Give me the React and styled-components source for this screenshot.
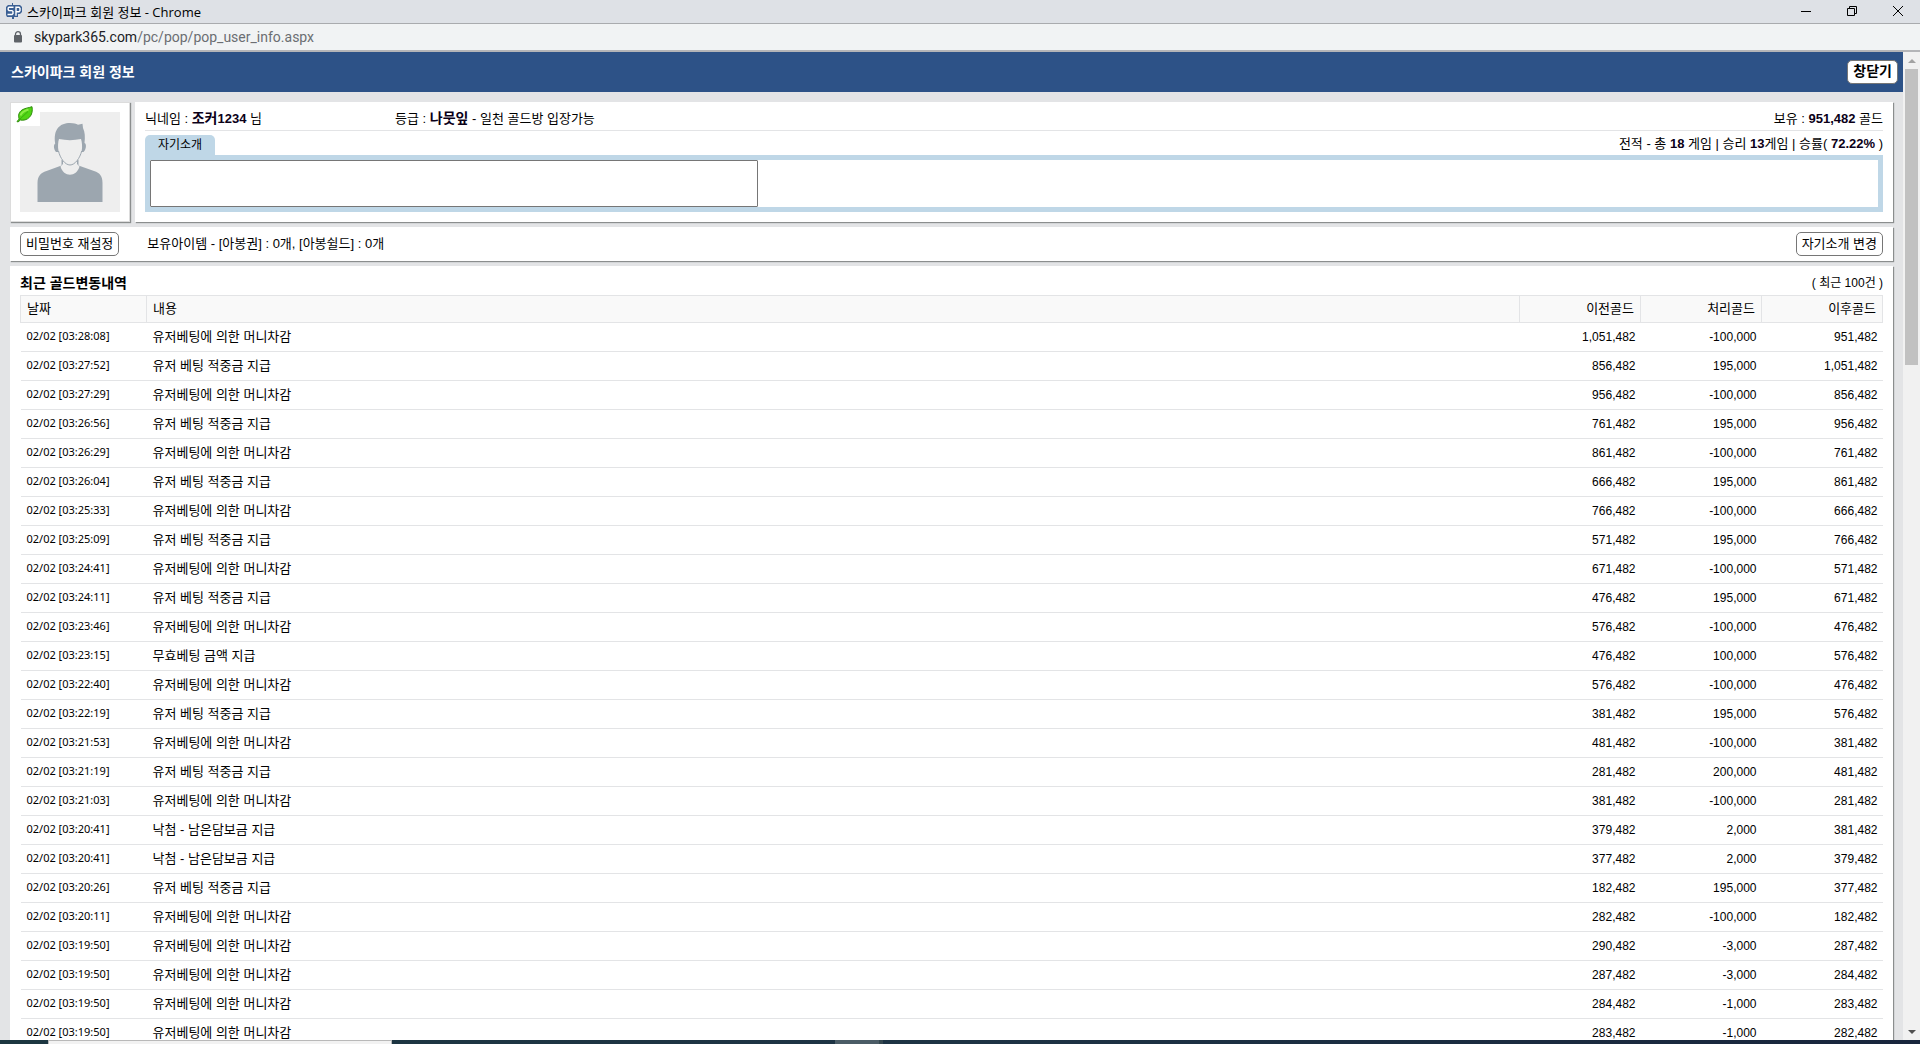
import React from "react";
import styled, { createGlobalStyle } from "styled-components";

const GlobalStyle = createGlobalStyle`
  * {
    box-sizing: border-box;
  }
  body {
    margin: 0;
    font-family: "Liberation Sans", "Noto Sans CJK KR", sans-serif;
    font-size: 13px;
    line-height: 18px;
    color: #000;
  }
`;

const Window = styled.div`
  height: 100vh;
  display: flex;
  flex-direction: column;
  overflow: hidden;
`;

const TitleBar = styled.header`
  display: flex;
  align-items: center;
  flex-shrink: 0;
  height: 24px;
  padding: 0 16px 2px 6px;
  background-color: #dee1e6;
  border-bottom: 1px solid #a9abae;
`;

const WindowTitle = styled.span`
  flex: 1;
  margin-left: 5px;
  padding-top: 2px;
  font-family: "Open Sans", "Noto Sans CJK KR", sans-serif;
  font-size: 13px;
`;

const WindowButtons = styled.div`
  display: flex;
  gap: 34px;
`;

const WindowButton = styled.button`
  display: flex;
  width: 12px;
  height: 12px;
  padding: 0;
  border: none;
  background: none;
`;

const AddressBar = styled.div`
  display: flex;
  align-items: center;
  flex-shrink: 0;
  gap: 11px;
  height: 28px;
  padding: 0 13px;
  background-color: #f1f3f4;
  border-bottom: 2px solid #b4b5b8;
`;

const Url = styled.span`
  font-family: Roboto, sans-serif;
  font-size: 14px;
  color: #6b6e72;
`;

const UrlHost = styled.span`
  color: #202124;
`;

const Body = styled.div`
  display: flex;
  flex: 1;
  min-height: 0;
`;

const Page = styled.main`
  flex: 1;
  min-width: 0;
  overflow: hidden;
  background-color: #e3e4e6;
`;

const PageHeader = styled.div`
  display: flex;
  align-items: center;
  justify-content: space-between;
  height: 40px;
  padding: 0 5px 1px 11px;
  background-color: #2d5287;
`;

const PageTitle = styled.h1`
  margin: 0;
  font-size: 14px;
  line-height: 18px;
  color: #fff;
`;

const Button = styled.button`
  height: 24px;
  padding: 0 5px 1px;
  font-family: inherit;
  font-size: ${(props) => (props.$bold ? "14px" : "13px")};
  line-height: 18px;
  font-weight: ${(props) => (props.$bold ? "bold" : "normal")};
  color: #000;
  background-color: #fff;
  border: 1px solid #767676;
  border-radius: 5px;
  cursor: pointer;
`;

const Content = styled.div`
  display: flex;
  flex-direction: column;
  gap: 5px;
  padding: 10px;
`;

const Panel = styled.section`
  background-color: #fff;
  box-shadow: 1px 1px 1px #8b8e8e;
`;

const ProfileRow = styled.div`
  display: flex;
  gap: 5px;
`;

const AvatarPanel = styled(Panel)`
  position: relative;
  width: 120px;
  height: 120px;
  padding: 10px;
  border: 1px solid #dcdcdc;

  > svg {
    display: block;
    margin: -1px;
  }
`;

const GradeBadge = styled.div`
  position: absolute;
  top: 0;
  left: 0;
  width: 29px;
  height: 23px;
  padding: 3px 5px;
  background-color: #fff;
`;

const InfoPanel = styled(Panel)`
  flex: 1;
  padding: 5px 10px 10px;
`;

const InfoLine = styled.div`
  display: flex;
  align-items: center;
  height: 24px;
  border-bottom: 1px solid #e3e4e6;
`;

const Nickname = styled.span`
  width: 250px;
`;

const Grade = styled.span`
  flex: 1;
`;

const Strong = styled.b`
  font-size: ${(props) => (props.$number ? "13px" : "14px")};
  line-height: 18px;
  color: #0b0018;
`;

const IntroHead = styled.div`
  display: flex;
  align-items: flex-end;
  justify-content: space-between;
  height: 24px;
`;

const IntroTab = styled.label`
  width: 70px;
  height: 20px;
  font-size: 12px;
  line-height: 21px;
  text-align: center;
  background-color: #bfd7e7;
  border-radius: 5px 5px 0 0;
`;

const Record = styled.span`
  height: 20px;
`;

const IntroBox = styled.div`
  display: flex;
  border: 5px solid #bfd7e7;
`;

const IntroText = styled.textarea`
  width: 608px;
  max-width: 100%;
  height: 47px;
  padding: 2px;
  font: inherit;
  border: 1px solid #767676;
  border-radius: 1px;
  resize: none;
`;

const ItemPanel = styled(Panel)`
  display: flex;
  align-items: center;
  height: 34px;
  padding: 0 10px;
`;

const Items = styled.span`
  flex: 1;
  margin-left: 28px;
`;

const HistoryPanel = styled(Panel)`
  padding: 8px 10px;
`;

const HistoryHead = styled.div`
  display: flex;
  justify-content: space-between;
  height: 21px;
`;

const HistoryTitle = styled.h2`
  margin: 0;
  font-size: 14px;
  line-height: 18px;
`;

const Count = styled.span`
  font-size: 12px;
`;

const Table = styled.table`
  width: 100%;
  border-collapse: collapse;
  table-layout: fixed;
`;

const Th = styled.th`
  width: ${(props) => props.$width || "auto"};
  height: 27px;
  padding: 0 6px;
  font-weight: normal;
  text-align: ${(props) => props.$align || "left"};
  background-color: #f9f9f9;
  border: 1px solid #e3e4e6;
`;

const Td = styled.td`
  height: 29px;
  padding: 0 5px 0 6px;
  text-align: ${(props) => props.$align || "left"};
  border-bottom: 1px solid #e3e4e6;
`;

const DateTd = styled(Td)`
  padding-bottom: 2px;
  font-family: "Noto Sans", sans-serif;
  font-size: 11px;
`;

const GoldTd = styled(Td)`
  font-size: 12px;
`;

const Scrollbar = styled.div`
  display: flex;
  flex-direction: column;
  align-items: center;
  width: 17px;
  background-color: #f1f1f1;
`;

const Arrow = styled.div`
  display: flex;
  align-items: center;
  justify-content: center;
  height: 17px;
`;

const Track = styled.div`
  flex: 1;
  width: 13px;
`;

const Thumb = styled.div`
  height: 31%;
  background-color: #c1c1c1;
`;

const TaskBar = styled.footer`
  display: flex;
  flex-shrink: 0;
  height: 4px;
  padding-left: 48px;
  background: linear-gradient(to right, #1c3640, #1d3344 50%, #18253c);
`;

const TaskSearch = styled.div`
  width: 344px;
  background-color: #f2f2f2;
  border: 1px solid #b9b9b9;
  border-bottom: none;
`;

const TaskItem = styled.div`
  width: 48px;
  margin-left: 443px;
  background-color: #4b5c66;
  border-right: 4px solid #34474f;
`;

const BET = "유저베팅에 의한 머니차감";
const WIN = "유저 베팅 적중금 지급";
const BID = "낙첨 - 남은담보금 지급";

const history = [
  ["03:28:08", BET, "1,051,482", "-100,000", "951,482"],
  ["03:27:52", WIN, "856,482", "195,000", "1,051,482"],
  ["03:27:29", BET, "956,482", "-100,000", "856,482"],
  ["03:26:56", WIN, "761,482", "195,000", "956,482"],
  ["03:26:29", BET, "861,482", "-100,000", "761,482"],
  ["03:26:04", WIN, "666,482", "195,000", "861,482"],
  ["03:25:33", BET, "766,482", "-100,000", "666,482"],
  ["03:25:09", WIN, "571,482", "195,000", "766,482"],
  ["03:24:41", BET, "671,482", "-100,000", "571,482"],
  ["03:24:11", WIN, "476,482", "195,000", "671,482"],
  ["03:23:46", BET, "576,482", "-100,000", "476,482"],
  ["03:23:15", "무효베팅 금액 지급", "476,482", "100,000", "576,482"],
  ["03:22:40", BET, "576,482", "-100,000", "476,482"],
  ["03:22:19", WIN, "381,482", "195,000", "576,482"],
  ["03:21:53", BET, "481,482", "-100,000", "381,482"],
  ["03:21:19", WIN, "281,482", "200,000", "481,482"],
  ["03:21:03", BET, "381,482", "-100,000", "281,482"],
  ["03:20:41", BID, "379,482", "2,000", "381,482"],
  ["03:20:41", BID, "377,482", "2,000", "379,482"],
  ["03:20:26", WIN, "182,482", "195,000", "377,482"],
  ["03:20:11", BET, "282,482", "-100,000", "182,482"],
  ["03:19:50", BET, "290,482", "-3,000", "287,482"],
  ["03:19:50", BET, "287,482", "-3,000", "284,482"],
  ["03:19:50", BET, "284,482", "-1,000", "283,482"],
  ["03:19:50", BET, "283,482", "-1,000", "282,482"],
];

const SiteIcon = () => (
  <svg width="16" height="16" viewBox="0 0 16 16">
    <path d="M6 0h1v2h7l2 2v5l-2 2h-2v3H8v2H6v-2H1l-1-2V4l2-2h4z" fill="#3a5f94" />
    <path
      d="M7.500 4.200H3L2.200 5v1.800l.8.800h3l1 1v1.900l-1 1H1.500M10 12.800V4.200h3l1 1v2.600l-1 1h-2.500"
      fill="none"
      stroke="#fff"
      strokeWidth="1.400"
    />
  </svg>
);

const LockIcon = () => (
  <svg width="10" height="12" viewBox="0 0 10 12">
    <path d="M2.500 5V3.200a2.500 2.500 0 0 1 5 0V5" fill="none" stroke="#5f6368" strokeWidth="1.300" />
    <rect x="1" y="4" width="8" height="7.500" rx="1" fill="#5f6368" />
  </svg>
);

const LeafIcon = () => (
  <svg width="17" height="17" viewBox="0 0 17 17">
    <path
      d="M1 15.500 3.200 13C1.800 9.500 3 6 6 4 9 2 12.500 2 16 .7c.8 4 0 8-2.600 10.600-2.600 2.700-6 3.300-9 2.700L2 16z"
      fill="#4fd413"
      stroke="#2f8c0c"
    />
    <path d="M4.500 9.500C5.500 6 9 4.500 12.500 3.500" fill="none" stroke="#8bec45" strokeWidth="2" />
    <path d="M3 14 12 5.500" fill="none" stroke="#35a30d" strokeWidth=".8" />
  </svg>
);

const Avatar = () => (
  <svg width="100" height="100" viewBox="0 0 100 100">
    <rect width="100" height="100" fill="#eee" />
    <path
      d="M17.500 90V71c0-7 3-10 9-12l15-5.500V48h17v5.500L74 59c6 2 8.500 5 8.500 12v19z"
      fill="#9ca6af"
    />
    <path d="M43 48v4l-2.500 2.500c3 11 16 11 19 0L57 52v-4z" fill="#eee" />
    <path
      d="M36 40c-2-2-3-7-.8-8.500C33 17 40 11 50 11c4 0 6 .8 8 1.800l4.500-1L63 16c2 4 2.200 9 1.500 15 2.500 1 1.500 7-1 9z"
      fill="#9ca6af"
    />
    <path
      d="M39 27c7 1.500 15 1.500 22 0 1 3 1.500 8 .7 12C60 46 55 53 50 53s-10-7-11.500-14c-.8-4-.5-9 .5-12z"
      fill="#eee"
    />
    <path d="M38.500 39C40 46 45 53 50 53s10-7 11.700-14" fill="none" stroke="#9ca6af" />
  </svg>
);

const App = () => {
  return (
    <Window>
      <GlobalStyle />
      <TitleBar>
        <SiteIcon />
        <WindowTitle>스카이파크 회원 정보 - Chrome</WindowTitle>
        <WindowButtons>
          <WindowButton aria-label="최소화">
            <svg width="12" height="12" viewBox="0 0 12 12">
              <path d="M1 6.500h10" stroke="#000" />
            </svg>
          </WindowButton>
          <WindowButton aria-label="이전 크기로 복원">
            <svg width="12" height="12" viewBox="0 0 12 12">
              <path d="M1.500 3.500h7v7h-7zM3.500 3V1.500h7v7H9" fill="none" stroke="#000" />
            </svg>
          </WindowButton>
          <WindowButton aria-label="닫기">
            <svg width="12" height="12" viewBox="0 0 12 12">
              <path d="m1 1 10 10M11 1 1 11" stroke="#000" />
            </svg>
          </WindowButton>
        </WindowButtons>
      </TitleBar>
      <AddressBar>
        <LockIcon />
        <Url>
          <UrlHost>skypark365.com</UrlHost>/pc/pop/pop_user_info.aspx
        </Url>
      </AddressBar>

      <Body>
        <Page>
          <PageHeader>
            <PageTitle>스카이파크 회원 정보</PageTitle>
            <Button $bold>창닫기</Button>
          </PageHeader>

          <Content>
            <ProfileRow>
              <AvatarPanel>
                <Avatar />
                <GradeBadge>
                  <LeafIcon />
                </GradeBadge>
              </AvatarPanel>
              <InfoPanel>
                <InfoLine>
                  <Nickname>
                    닉네임 : <Strong>조커</Strong>
                    <Strong $number>1234</Strong> 님
                  </Nickname>
                  <Grade>
                    등급 : <Strong>나뭇잎</Strong> - 일천 골드방 입장가능
                  </Grade>
                  <span>
                    보유 : <Strong $number>951,482</Strong> 골드
                  </span>
                </InfoLine>
                <IntroHead>
                  <IntroTab htmlFor="intro">자기소개</IntroTab>
                  <Record>
                    전적 - 총 <Strong $number>18</Strong> 게임 | 승리 <Strong $number>13</Strong>게임 | 승률({" "}
                    <Strong $number>72.22%</Strong> )
                  </Record>
                </IntroHead>
                <IntroBox>
                  <IntroText id="intro" />
                </IntroBox>
              </InfoPanel>
            </ProfileRow>

            <ItemPanel>
              <Button>비밀번호 재설정</Button>
              <Items>보유아이템 - [아봉권] : 0개, [아봉쉴드] : 0개</Items>
              <Button>자기소개 변경</Button>
            </ItemPanel>

            <HistoryPanel>
              <HistoryHead>
                <HistoryTitle>최근 골드변동내역</HistoryTitle>
                <Count>( 최근 100건 )</Count>
              </HistoryHead>
              <Table>
                <thead>
                  <tr>
                    <Th $width="126px">날짜</Th>
                    <Th>내용</Th>
                    <Th $width="121px" $align="right">이전골드</Th>
                    <Th $width="121px" $align="right">처리골드</Th>
                    <Th $width="121px" $align="right">이후골드</Th>
                  </tr>
                </thead>
                <tbody>
                  {history.map(([time, text, before, amount, after], index) => (
                    <tr key={index}>
                      <DateTd>02/02 [{time}]</DateTd>
                      <Td>{text}</Td>
                      <GoldTd $align="right">{before}</GoldTd>
                      <GoldTd $align="right">{amount}</GoldTd>
                      <GoldTd $align="right">{after}</GoldTd>
                    </tr>
                  ))}
                </tbody>
              </Table>
            </HistoryPanel>
          </Content>
        </Page>

        <Scrollbar>
          <Arrow>
            <svg width="8" height="4" viewBox="0 0 8 4">
              <path d="M0 4 4 0l4 4z" fill="#a3a3a3" />
            </svg>
          </Arrow>
          <Track>
            <Thumb />
          </Track>
          <Arrow>
            <svg width="8" height="4" viewBox="0 0 8 4">
              <path d="m0 0 4 4 4-4z" fill="#505050" />
            </svg>
          </Arrow>
        </Scrollbar>
      </Body>

      <TaskBar>
        <TaskSearch />
        <TaskItem />
      </TaskBar>
    </Window>
  );
};

export default App;
